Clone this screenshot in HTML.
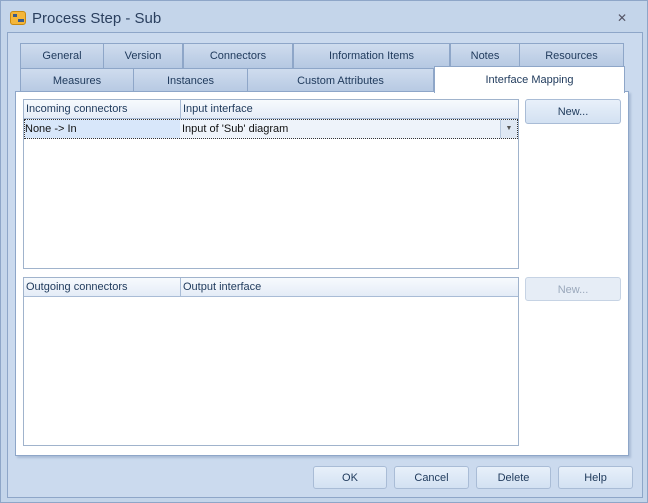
<!DOCTYPE html><html><head><style>
body{margin:0;width:648px;height:503px;background:#c4d5ea;font-family:"Liberation Sans",sans-serif;font-size:11px;color:#1e395b;position:relative;overflow:hidden}
.a{position:absolute;box-sizing:border-box}
.tab{position:absolute;box-sizing:border-box;height:25px;background:linear-gradient(#cfdcee,#b5c8e2);border:1px solid #8ea6c8;border-bottom:none;text-align:center;line-height:25px;color:#1e395b}
.btn{position:absolute;box-sizing:border-box;height:23px;border:1px solid #a9bcd6;border-radius:3px;background:linear-gradient(#e8f0fa,#d3e1f2);text-align:center;line-height:22px;color:#1e395b}
.hd{position:absolute;box-sizing:border-box;height:19px;background:linear-gradient(#f7fafd,#e4ecf7);border-bottom:1px solid #a9bcd6;line-height:19px;color:#1e395b}
</style></head><body>
<div class="a" style="left:0;top:0;width:648px;height:503px;border:1px solid #8ea6c8"></div>
<div class="a" style="left:10px;top:11px;width:16px;height:14px;border-radius:3px;background:#f4b63a;border:1px solid #c98a10"></div>
<div class="a" style="left:13px;top:14px;width:4px;height:3px;background:#3a5a8a"></div>
<div class="a" style="left:18px;top:19px;width:6px;height:3px;background:#3a5a8a"></div>
<div class="a" style="left:32px;top:10px;font-size:15px;color:#2a3f5e">Process Step - Sub</div>
<div class="a" style="left:617px;top:11px;font-size:12px;color:#556">✕</div>
<div class="a" style="left:7px;top:32px;width:636px;height:466px;border:1px solid #8ea6c8;background:#cbdaee"></div>
<div class="tab" style="left:20px;top:43px;width:84px">General</div>
<div class="tab" style="left:103px;top:43px;width:80px">Version</div>
<div class="tab" style="left:183px;top:43px;width:110px">Connectors</div>
<div class="tab" style="left:293px;top:43px;width:157px">Information Items</div>
<div class="tab" style="left:450px;top:43px;width:70px">Notes</div>
<div class="tab" style="left:519px;top:43px;width:105px">Resources</div>
<div class="tab" style="left:20px;top:68px;width:114px">Measures</div>
<div class="tab" style="left:133px;top:68px;width:115px">Instances</div>
<div class="tab" style="left:247px;top:68px;width:187px">Custom Attributes</div>
<div class="a" style="left:15px;top:91px;width:614px;height:365px;background:#fff;border:1px solid #8ea6c8;box-shadow:2px 2px 2px #a9bcd6"></div>
<div class="a" style="left:434px;top:66px;width:191px;height:27px;background:#fff;border:1px solid #8ea6c8;border-bottom:none;text-align:center;line-height:27px">Interface Mapping</div>
<div class="a" style="left:23px;top:99px;width:496px;height:170px;border:1px solid #a0b3cc;background:#fff"></div>
<div class="hd" style="left:24px;top:100px;width:157px;padding-left:2px;border-right:1px solid #a9bcd6">Incoming connectors</div>
<div class="hd" style="left:181px;top:100px;width:337px;padding-left:2px">Input interface</div>
<div class="a" style="left:24px;top:119px;width:494px;height:20px;border:1px dotted #333;background:#eef3fa"></div>
<div class="a" style="left:25px;top:120px;width:155px;height:18px;background:#d8e7fa;line-height:19px;color:#111">None -&gt; In</div>
<div class="a" style="left:182px;top:120px;line-height:19px;color:#111">Input of 'Sub' diagram</div>
<div class="a" style="left:500px;top:120px;width:17px;height:18px;background:#dfe8f4;border-left:1px solid #b6c7dd;text-align:center;font-size:7px;line-height:18px;color:#555">▼</div>
<div class="a" style="left:23px;top:277px;width:496px;height:169px;border:1px solid #a0b3cc;background:#fff"></div>
<div class="hd" style="left:24px;top:278px;width:157px;padding-left:2px;border-right:1px solid #a9bcd6">Outgoing connectors</div>
<div class="hd" style="left:181px;top:278px;width:337px;padding-left:2px">Output interface</div>
<div class="btn" style="left:525px;top:99px;width:96px;height:25px;line-height:25px">New...</div>
<div class="btn" style="left:525px;top:277px;width:96px;height:24px;line-height:24px;color:#9aa8bb;background:#e6edf6;border-color:#c6d3e4">New...</div>
<div class="btn" style="left:313px;top:466px;width:74px">OK</div>
<div class="btn" style="left:394px;top:466px;width:75px">Cancel</div>
<div class="btn" style="left:476px;top:466px;width:75px">Delete</div>
<div class="btn" style="left:558px;top:466px;width:75px">Help</div>
</body></html>
